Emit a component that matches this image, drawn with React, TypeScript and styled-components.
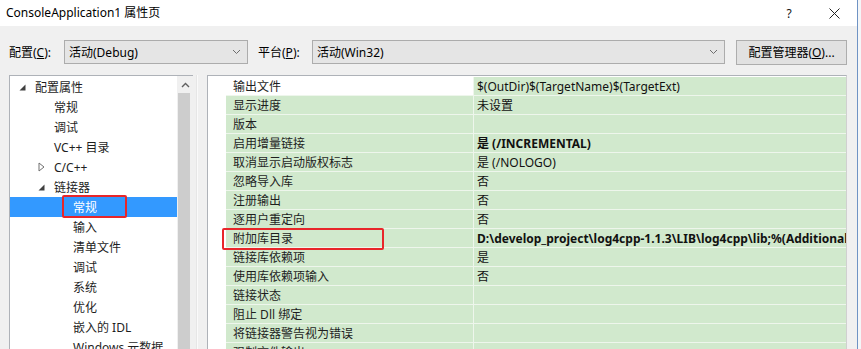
import React from "react";
import styled, { createGlobalStyle } from "styled-components";

const Global = createGlobalStyle`
  html, body { margin: 0; padding: 0; background: #f0f0f0; }
  body { font-family: "Segoe UI", "Noto Sans", "Noto Sans CJK SC", sans-serif; font-size: 12px; color: #000; overflow: hidden; }
`;

const Screen = styled.div`
  display: flex;
  width: 861px;
  height: 349px;
  overflow: hidden;
`;

const Window = styled.div`
  width: 857px;
  flex: none;
  display: flex;
  flex-direction: column;
  background: #f0f0f0;
  overflow: hidden;
`;

const EdgeStrip = styled.div`
  width: 4px;
  flex: none;
  box-sizing: border-box;
  border-left: 1px solid #6f93c4;
  background: #f4f6f8;
`;

const TitleBar = styled.div`
  height: 26px;
  flex: none;
  background: #fff;
  display: flex;
  align-items: center;
  padding-left: 6px;
`;

const TitleText = styled.div`
  flex: 1;
  font-size: 12px;
  line-height: 16px;
  margin-top: -1px;
`;

const TitleBtn = styled.div<{ $w: number }>`
  width: ${(p) => p.$w}px;
  display: flex;
  align-items: center;
  justify-content: center;
  font-size: 12px;
  color: #111;
`;

const Toolbar = styled.div`
  flex: none;
  margin-top: 14px;
  height: 24px;
  display: flex;
  align-items: center;
  padding-left: 9px;
`;

const Label = styled.span<{ $w: number; $ml?: number }>`
  width: ${(p) => p.$w}px;
  margin-left: ${(p) => p.$ml ?? 0}px;
  white-space: nowrap;
`;

const U = styled.span`
  text-decoration: underline;
`;

const Combo = styled.div<{ $w: number }>`
  width: ${(p) => p.$w}px;
  flex: none;
  height: 24px;
  box-sizing: border-box;
  border: 1px solid #acacac;
  background: #e5e5e5;
  display: flex;
  align-items: center;
  padding-left: 4px;
  padding-right: 6px;
`;

const ComboText = styled.span`
  flex: 1;
  white-space: nowrap;
`;

const Button = styled.div`
  margin-left: 11px;
  flex: none;
  width: 111px;
  height: 25px;
  box-sizing: border-box;
  border: 1px solid #adadad;
  background: #e1e1e1;
  display: flex;
  align-items: center;
  justify-content: center;
  white-space: nowrap;
`;

const Panels = styled.div`
  flex: none;
  margin-top: 11px;
  display: flex;
  padding-left: 9px;
  height: 280px;
`;

const Tree = styled.div`
  width: 184px;
  flex: none;
  box-sizing: border-box;
  border: 1px solid #aeb2b8;
  border-right: none;
  background: #fff;
  display: flex;
`;

const TreeList = styled.div`
  flex: 1;
  min-width: 0;
  padding-top: 1px;
  display: flex;
  flex-direction: column;
`;

const TreeRow = styled.div<{ $selected?: boolean }>`
  position: relative;
  flex: none;
  height: 20px;
  display: flex;
  align-items: center;
  white-space: nowrap;
  background: ${(p) => (p.$selected ? "#3399ff" : "transparent")};
  color: ${(p) => (p.$selected ? "#fff" : "#1e1e1e")};
`;

const Indent = styled.div<{ $level: number }>`
  width: ${(p) => 9 + p.$level * 19}px;
  flex: none;
`;

const Expander = styled.div`
  width: 16px;
  height: 20px;
  flex: none;
  display: flex;
  align-items: center;
  justify-content: flex-start;
`;

const Mark = styled.div<{ $l: number; $t: number; $w: number; $h: number }>`
  position: absolute;
  z-index: 3;
  left: ${(p) => p.$l}px;
  top: ${(p) => p.$t}px;
  width: ${(p) => p.$w}px;
  height: ${(p) => p.$h}px;
  box-sizing: border-box;
  border: 2px solid #e8262a;
  border-radius: 2px;
  pointer-events: none;
`;

const ScrollBar = styled.div`
  width: 16px;
  flex: none;
  background: #f0f0f0;
  display: flex;
  flex-direction: column;
`;

const ScrollArrow = styled.div`
  height: 17px;
  display: flex;
  align-items: center;
  justify-content: center;
`;

const ScrollThumb = styled.div`
  flex: 1;
  margin: 0 3px 0 1px;
  background: #cdcdcd;
`;

const Splitter = styled.div`
  width: 14px;
  flex: none;
  display: flex;
  justify-content: center;
`;

const SplitLine = styled.div`
  width: 1px;
  margin-left: -6px;
  background: #e6e6e6;
  border-right: 1px solid #fafafa;
`;

const Grid = styled.div`
  width: 640px;
  flex: none;
  box-sizing: border-box;
  border: 1px solid #aeb2b8;
  border-right-color: #d0d0d0;
  background: #fff;
  display: flex;
  overflow: hidden;
`;

const Gutter = styled.div`
  width: 18px;
  flex: none;
  background: #fff;
`;

const GridRows = styled.div`
  flex: 1;
  min-width: 0;
  padding-top: 1px;
  display: flex;
  flex-direction: column;
`;

const GridRow = styled.div`
  position: relative;
  flex: none;
  display: flex;
  height: 19px;
  box-sizing: border-box;
  border-bottom: 1px solid #eef6ec;
`;

const NameCell = styled.div<{ $white?: boolean }>`
  width: 248px;
  flex: none;
  box-sizing: border-box;
  padding-left: 7px;
  background: ${(p) => (p.$white ? "#ffffff" : "#d1e9cd")};
  border-right: 1px solid #eef6ec;
  display: flex;
  align-items: center;
  white-space: nowrap;
  color: #1e1e1e;
`;

const ValueCell = styled.div<{ $bold?: boolean }>`
  flex: 1;
  min-width: 0;
  overflow: hidden;
  padding-left: 3px;
  background: #d1e9cd;
  display: flex;
  align-items: center;
  white-space: nowrap;
  font-weight: ${(p) => (p.$bold ? 700 : 400)};
  color: #111;
`;

const Chevron = () => (
  <svg width="9" height="6" viewBox="0 0 9 6">
    <path d="M1 1 L4.5 4.5 L8 1" fill="none" stroke="#6d6d6d" strokeWidth="1" />
  </svg>
);

const Open = () => (
  <svg width="7" height="7" viewBox="0 0 7 7">
    <path d="M6.5 0.5 L6.5 6.5 L0.5 6.5 Z" fill="#404040" />
  </svg>
);

const Closed = () => (
  <svg width="7" height="10" viewBox="0 0 7 10">
    <path d="M1 1 L6 5 L1 9 Z" fill="#fff" stroke="#707070" strokeWidth="1" />
  </svg>
);

type TreeItem = { label: string; level: number; exp?: "open" | "closed"; selected?: boolean; mark?: boolean };

const tree: TreeItem[] = [
  { label: "配置属性", level: 0, exp: "open" },
  { label: "常规", level: 1 },
  { label: "调试", level: 1 },
  { label: "VC++ 目录", level: 1 },
  { label: "C/C++", level: 1, exp: "closed" },
  { label: "链接器", level: 1, exp: "open" },
  { label: "常规", level: 2, selected: true, mark: true },
  { label: "输入", level: 2 },
  { label: "清单文件", level: 2 },
  { label: "调试", level: 2 },
  { label: "系统", level: 2 },
  { label: "优化", level: 2 },
  { label: "嵌入的 IDL", level: 2 },
  { label: "Windows 元数据", level: 2 },
];

type Prop = { name: string; value?: string; bold?: boolean; mark?: boolean; white?: boolean };

const props: Prop[] = [
  { name: "输出文件", value: "$(OutDir)$(TargetName)$(TargetExt)", white: true },
  { name: "显示进度", value: "未设置" },
  { name: "版本" },
  { name: "启用增量链接", value: "是 (/INCREMENTAL)", bold: true },
  { name: "取消显示启动版权标志", value: "是 (/NOLOGO)" },
  { name: "忽略导入库", value: "否" },
  { name: "注册输出", value: "否" },
  { name: "逐用户重定向", value: "否" },
  { name: "附加库目录", value: "D:\\develop_project\\log4cpp-1.1.3\\LIB\\log4cpp\\lib;%(AdditionalLibraryDirectories)", bold: true, mark: true },
  { name: "链接库依赖项", value: "是" },
  { name: "使用库依赖项输入", value: "否" },
  { name: "链接状态" },
  { name: "阻止 Dll 绑定" },
  { name: "将链接器警告视为错误" },
  { name: "强制文件输出" },
];

export default function App() {
  return (
    <>
      <Global />
      <Screen>
        <Window>
          <TitleBar>
            <TitleText>ConsoleApplication1 属性页</TitleText>
            <TitleBtn $w={44}>?</TitleBtn>
            <TitleBtn $w={46}>
              <svg width="11" height="11" viewBox="0 0 11 11">
                <path d="M0.5 0.5 L10.5 10.5 M10.5 0.5 L0.5 10.5" stroke="#222" strokeWidth="1" />
              </svg>
            </TitleBtn>
          </TitleBar>
          <Toolbar>
            <Label $w={55}>
              配置(<U>C</U>):
            </Label>
            <Combo $w={184}>
              <ComboText>活动(Debug)</ComboText>
              <Chevron />
            </Combo>
            <Label $w={54} $ml={10}>
              平台(<U>P</U>):
            </Label>
            <Combo $w={413}>
              <ComboText>活动(Win32)</ComboText>
              <Chevron />
            </Combo>
            <Button>
              配置管理器(<U>O</U>)...
            </Button>
          </Toolbar>
          <Panels>
            <Tree>
              <TreeList>
                {tree.map((t, i) => (
                  <TreeRow key={i} $selected={t.selected}>
                    <Indent $level={t.level} />
                    <Expander>{t.exp === "open" ? <Open /> : t.exp === "closed" ? <Closed /> : null}</Expander>
                    {t.label}
                    {t.mark && <Mark $l={52} $t={-2} $w={65} $h={23} />}
                  </TreeRow>
                ))}
              </TreeList>
              <ScrollBar>
                <ScrollArrow>
                  <svg width="9" height="6" viewBox="0 0 9 6">
                    <path d="M1 5 L4.5 1.5 L8 5" fill="none" stroke="#606060" strokeWidth="1.4" />
                  </svg>
                </ScrollArrow>
                <ScrollThumb />
              </ScrollBar>
            </Tree>
            <Splitter>
              <SplitLine />
            </Splitter>
            <Grid>
              <Gutter />
              <GridRows>
                {props.map((p, i) => (
                  <GridRow key={i}>
                    <NameCell $white={p.white}>{p.name}</NameCell>
                    <ValueCell $bold={p.bold}>{p.value ?? ""}</ValueCell>
                    {p.mark && <Mark $l={-4} $t={-1} $w={162} $h={22} />}
                  </GridRow>
                ))}
              </GridRows>
            </Grid>
          </Panels>
        </Window>
        <EdgeStrip />
      </Screen>
    </>
  );
}
